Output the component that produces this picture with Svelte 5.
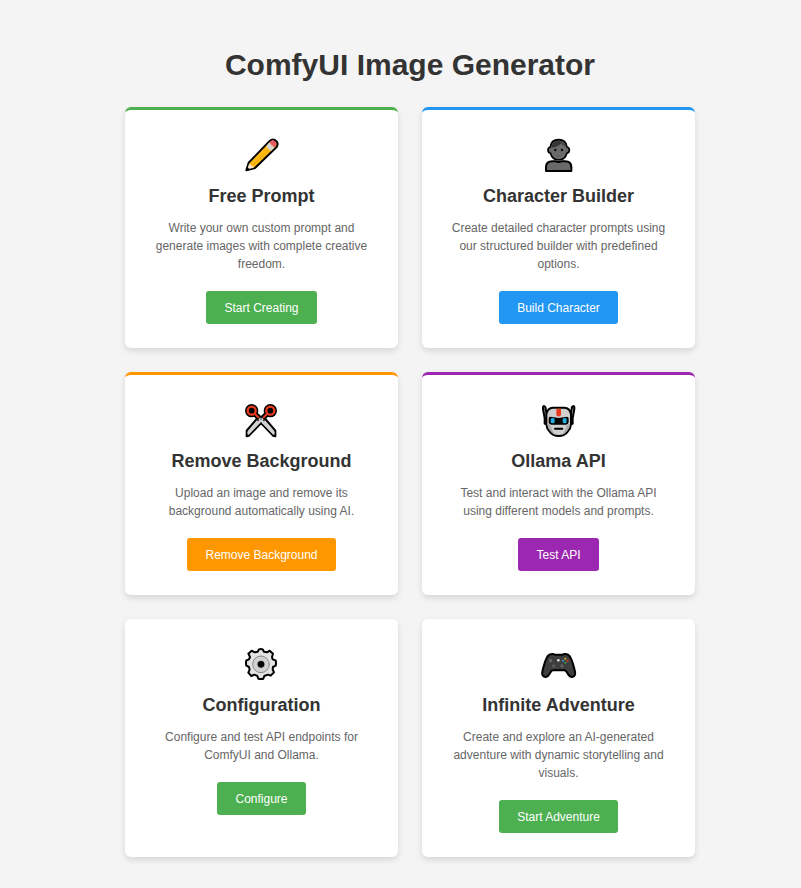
<script>
  const cards = [
    { icon: 'pencil', title: 'Free Prompt', text: 'Write your own custom prompt and generate images with complete creative freedom.', action: 'Start Creating', tone: 'green', edge: true },
    { icon: 'person', title: 'Character Builder', text: 'Create detailed character prompts using our structured builder with predefined options.', action: 'Build Character', tone: 'blue', edge: true },
    { icon: 'scissors', title: 'Remove Background', text: 'Upload an image and remove its background automatically using AI.', action: 'Remove Background', tone: 'orange', edge: true },
    { icon: 'robot', title: 'Ollama API', text: 'Test and interact with the Ollama API using different models and prompts.', action: 'Test API', tone: 'purple', edge: true },
    { icon: 'gear', title: 'Configuration', text: 'Configure and test API endpoints for ComfyUI and Ollama.', action: 'Configure', tone: 'green', edge: false },
    { icon: 'gamepad', title: 'Infinite Adventure', text: 'Create and explore an AI-generated adventure with dynamic storytelling and visuals.', action: 'Start Adventure', tone: 'green', edge: false }
  ];
</script>

<main>
  <h1>ComfyUI Image Generator</h1>
  <div class="grid">
    {#each cards as card}
      <section class="card {card.tone}" class:edge={card.edge}>
        <svg class="icon" viewBox="21 21 111 108" aria-hidden="true" stroke-linejoin="round" stroke-linecap="round">
          {#if card.icon === 'pencil'}
            <path d="M31 121 L38 98 L99 35 Q108 24 118 31 Q130 39 121 52 L57 114 Z" fill="#fdb813" stroke="#000" stroke-width="6" />
            <path d="M34 118 L39 102 Q47 102 47 108 Q53 108 54 113 Z" fill="#fde2d0" />
            <path d="M31 121 L33 111 L41 118 Z" fill="#000" />
            <path d="M91 47 L101 37 Q105 48 116 52 L106 62 Q95 60 91 47 Z" fill="#d5d5d5" />
            <path d="M101 37 Q108 27 116 33 Q125 40 116 52 Q105 48 101 37 Z" fill="#ea5a67" />
            <path d="M52 104 L99 58" stroke="#e6a000" stroke-width="2" />
          {:else if card.icon === 'person'}
            <path d="M39 123 V111 Q39 94 58 94 H68 Q77 98 86 94 H96 Q115 94 115 111 V123 Z" fill="#6a6a6a" stroke="#000" stroke-width="6" />
            <path d="M52 51 Q54 29 77 29 Q99 29 102 51 Q109 52 109 60 Q109 68 102 69 Q96 90 77 90 Q58 90 52 69 Q45 68 45 60 Q45 52 52 51 Z" fill="#6a6a6a" stroke="#000" stroke-width="5" />
            <path d="M55 54 Q56 32 77 32 Q83 32 88 34 Q82 50 55 54 Z" fill="#353535" />
            <path d="M81 33 Q95 34 99 50 Q90 47 84 41 Z" fill="#484848" />
            <circle cx="67" cy="60" r="3.5" /><circle cx="87" cy="60" r="3.5" />
            <path d="M71 77 Q77 79 83 77" fill="none" stroke="#555" stroke-width="2" />
          {:else if card.icon === 'scissors'}
            <path d="M57 57 L93 91 M93 57 L57 91" stroke="#000" stroke-width="16" />
            <path d="M67 76 L83 66 L118 107 V124 L111 122 Z M83 76 L67 66 L32 107 V124 L39 122 Z" fill="#d0d0d0" stroke="#000" stroke-width="6" />
            <path d="M70 70 L114 116 M80 70 L36 116" stroke="#d0d0d0" stroke-width="8" stroke-linecap="butt" />
            <circle cx="47" cy="47" r="20" /><circle cx="103" cy="47" r="20" />
            <circle cx="47" cy="47" r="12" fill="#000" stroke="#ea3b1e" stroke-width="7" />
            <circle cx="103" cy="47" r="12" fill="#000" stroke="#ea3b1e" stroke-width="7" />
            <path d="M57 57 L67 67 M93 57 L83 67" stroke="#ea3b1e" stroke-width="6" />
            <circle cx="75" cy="72" r="3" fill="#777" />
          {:else if card.icon === 'robot'}
            <path d="M33 33 Q29 34 30 42 L35 69 V86 H42 V61 L37 36 Z M121 33 Q125 34 124 42 L119 69 V86 H112 V61 L117 36 Z" fill="#999" stroke="#000" stroke-width="6" />
            <path d="M40 58 Q43 39 60 38 H94 Q111 39 114 58 V88 Q113 101 104 110 Q95 123 77 123 Q59 123 50 110 Q41 101 40 88 Z" fill="#d0cfce" stroke="#000" stroke-width="6" />
            <path d="M43 86 Q44 100 52 108 Q59 118 69 120 Q57 109 52 89 Z M111 86 Q110 100 102 108 Q95 118 85 120 Q97 109 102 89 Z" fill="#aaa" />
            <path d="M70 41 H84 V60 L81 64 H73 L70 60 Z" fill="#ea3b1e" />
            <path d="M52 65 L77 69 L102 65 Q107 65 107 71 V82 Q107 88 99 89 H55 Q47 88 47 82 V71 Q47 65 52 65 Z" fill="#000" />
            <rect x="53" y="69" width="12" height="16" rx="5" fill="#20afe0" />
            <rect x="89" y="69" width="12" height="16" rx="5" fill="#20afe0" />
            <path d="M66 101 H88" stroke="#000" stroke-width="6" />
          {:else if card.icon === 'gear'}
            <path d="M65 38 L69 31 Q75 29 80 31 L84 38 L93 40 L101 35 L111 44 L108 54 L110 61 L119 64 Q121 72 119 80 L111 84 L110 91 L114 100 L104 110 L96 107 L85 111 L82 119 Q75 121 67 119 L64 111 L55 107 L46 111 L37 101 L41 92 L39 84 L31 80 Q29 72 31 64 L39 61 L42 54 L37 44 L47 35 L56 40 Z" fill="#e3e3e3" stroke="#000" stroke-width="6" />
            <circle cx="75" cy="76" r="25" fill="#d0d0d0" stroke="#8a8a8a" stroke-width="3" />
            <circle cx="75" cy="76" r="15" fill="#bbb" stroke="#ddd" stroke-width="2" />
            <circle cx="75" cy="76" r="10" fill="#000" />
          {:else}
            <path d="M43 53 Q49 44 60 45 L65 47 H89 L94 45 Q105 44 111 53 Q119 66 126 98 Q129 112 117 114 Q109 114 101 99 Q98 94 93 94 H61 Q56 94 53 99 Q45 114 37 114 Q25 112 28 98 Q35 66 43 53 Z" fill="#3e3e3e" stroke="#000" stroke-width="6" />
            <circle cx="53" cy="65" r="5" fill="#686868" /><circle cx="62" cy="81" r="5" fill="#5a5a5a" />
            <circle cx="87" cy="81" r="5" fill="#626262" /><circle cx="76" cy="64" r="4" fill="#ddd" />
            <circle cx="97" cy="59" r="3" fill="#f1b31c" /><circle cx="90" cy="65" r="3" fill="#4098d8" />
            <circle cx="104" cy="65" r="3" fill="#ea3b1e" /><circle cx="97" cy="71" r="3" fill="#35a853" />
          {/if}
        </svg>
        <h2>{card.title}</h2>
        <p>{card.text}</p>
        <button type="button">{card.action}</button>
      </section>
    {/each}
  </div>
</main>

<style>
  :global(body) {
    background: #f4f4f4;
    font-family: "Liberation Sans", Arial, sans-serif;
  }
  main {
    max-width: 570px;
    margin: 0 auto;
    padding: 47px 0 30px 19px;
  }
  h1 {
    margin: 0 0 24px;
    color: #333;
    font-size: 30px;
    line-height: 36px;
    text-align: center;
  }
  .grid {
    display: grid;
    grid-template-columns: repeat(auto-fit, minmax(240px, 1fr));
    gap: 24px;
  }
  .card {
    --tone: #4caf50;
    padding: 24px;
    border-radius: 6px;
    background: #fff;
    box-shadow: 0 3px 6px rgba(0, 0, 0, 0.12);
    text-align: center;
  }
  .blue { --tone: #2196f3; }
  .orange { --tone: #ff9800; }
  .purple { --tone: #9c27b0; }
  .edge { border-top: 3px solid var(--tone); }
  .icon {
    display: block;
    width: 37px;
    height: 36px;
    margin: 3px auto 13px;
  }
  h2 {
    margin: 0 0 13px;
    color: #333;
    font-size: 18px;
    line-height: 20px;
  }
  p {
    margin: 0 0 18px;
    color: #666;
    font-size: 12px;
    line-height: 18px;
  }
  button {
    display: inline-block;
    height: 33px;
    padding: 0 18px;
    border: 0;
    border-radius: 3px;
    background: var(--tone);
    color: #fff;
    font: 12px/18px "Liberation Sans", Arial, sans-serif;
    vertical-align: top;
    cursor: pointer;
  }
</style>
